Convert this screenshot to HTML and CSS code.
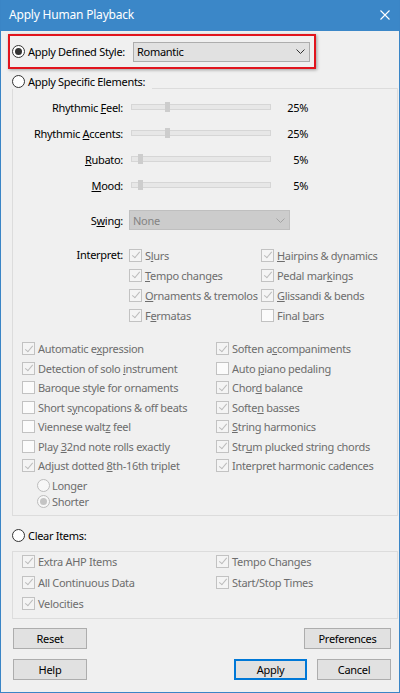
FILE: index.html
```html
<!DOCTYPE html>
<html>
<head>
<meta charset="utf-8">
<title>Apply Human Playback</title>
<link rel="stylesheet" href="styles.css">
</head>
<body>
<div class="window">
  <div class="titlebar">
    <span class="title">Apply Human Playback</span>
    <svg class="close" width="10" height="10" viewBox="0 0 10 10"><path d="M0.5 0.5L9.5 9.5M9.5 0.5L0.5 9.5" stroke="#fff" stroke-width="1.1" fill="none"/></svg>
  </div>
  <div class="content">
    <div class="defined">
      <span class="radio on"></span><span class="dlabel">Apply Defined Style:</span>
      <div class="select">
        <span>Romantic</span>
        <svg class="chev" width="9" height="5" viewBox="0 0 9 5"><path d="M0.5 0.5L4.5 4.5L8.5 0.5" fill="none" stroke="#333" stroke-width="1"/></svg>
      </div>
    </div>

    <div class="group-label"><span class="radio"></span><span>Apply Specific Elements:</span></div>
    <div class="group main">
      <div class="slider-row">
        <span class="flabel">Rhythmic <u>F</u>eel:</span>
        <div class="track"><span class="thumb" style="left:33px"></span></div>
        <span class="pct">25%</span>
      </div>
      <div class="slider-row">
        <span class="flabel">Rhythmic <u>A</u>ccents:</span>
        <div class="track"><span class="thumb" style="left:33px"></span></div>
        <span class="pct">25%</span>
      </div>
      <div class="slider-row">
        <span class="flabel"><u>R</u>ubato:</span>
        <div class="track"><span class="thumb" style="left:6px"></span></div>
        <span class="pct">5%</span>
      </div>
      <div class="slider-row">
        <span class="flabel"><u>M</u>ood:</span>
        <div class="track"><span class="thumb" style="left:6px"></span></div>
        <span class="pct">5%</span>
      </div>

      <div class="swing-row">
        <span class="flabel">S<u>w</u>ing:</span>
        <div class="select disabled">
          <span>None</span>
          <svg class="chev" width="9" height="5" viewBox="0 0 9 5"><path d="M0.5 0.5L4.5 4.5L8.5 0.5" fill="none" stroke="#a4a4a4" stroke-width="1"/></svg>
        </div>
      </div>

      <div class="interp">
        <span class="flabel">Interpret:</span>
        <div class="igrid">
          <div class="cb"><span class="box on"></span><span>S<u>l</u>urs</span></div>
          <div class="cb"><span class="box on"></span><span><u>H</u>airpins &amp; dynamics</span></div>
          <div class="cb"><span class="box on"></span><span><u>T</u>empo changes</span></div>
          <div class="cb"><span class="box on"></span><span>Pedal mar<u>k</u>ings</span></div>
          <div class="cb"><span class="box on"></span><span><u>O</u>rnaments &amp; tremolos</span></div>
          <div class="cb"><span class="box on"></span><span><u>G</u>lissandi &amp; bends</span></div>
          <div class="cb"><span class="box on"></span><span>F<u>e</u>rmatas</span></div>
          <div class="cb"><span class="box"></span><span>Final <u>b</u>ars</span></div>
        </div>
      </div>

      <div class="opts">
        <div class="ocol first">
          <div class="cb"><span class="box on"></span><span>Automatic e<u>x</u>pression</span></div>
          <div class="cb"><span class="box on"></span><span>Detection of solo <u>i</u>nstrument</span></div>
          <div class="cb"><span class="box"></span><span>Baroque style for ornaments</span></div>
          <div class="cb"><span class="box"></span><span>Short s<u>y</u>ncopations &amp; off beats</span></div>
          <div class="cb"><span class="box"></span><span>Viennese walt<u>z</u> feel</span></div>
          <div class="cb"><span class="box"></span><span>Play <u>3</u>2nd note rolls exactly</span></div>
          <div class="cb"><span class="box on"></span><span>Adjust dotted <u>8</u>th-16th triplet</span></div>
          <div class="subradios">
            <div class="rb"><span class="radio dis"></span><span>Longer</span></div>
            <div class="rb"><span class="radio dis on"></span><span>Shorter</span></div>
          </div>
        </div>
        <div class="ocol">
          <div class="cb"><span class="box on"></span><span>Soften a<u>c</u>companiments</span></div>
          <div class="cb"><span class="box"></span><span>Auto <u>p</u>iano pedaling</span></div>
          <div class="cb"><span class="box on"></span><span>Chor<u>d</u> balance</span></div>
          <div class="cb"><span class="box on"></span><span>Softe<u>n</u> basses</span></div>
          <div class="cb"><span class="box on"></span><span><u>S</u>tring harmonics</span></div>
          <div class="cb"><span class="box on"></span><span>Str<u>u</u>m plucked string chords</span></div>
          <div class="cb"><span class="box on"></span><span>Interpret harmonic cadences</span></div>
        </div>
      </div>
    </div>

    <div class="clear-label"><span class="radio"></span><span>Clear Items:</span></div>
    <div class="group clear">
      <div class="cb"><span class="box on"></span><span>Extra AHP Items</span></div>
      <div class="cb"><span class="box on"></span><span>Tempo Changes</span></div>
      <div class="cb"><span class="box on"></span><span>All Continuous Data</span></div>
      <div class="cb"><span class="box on"></span><span>Start/Stop Times</span></div>
      <div class="cb"><span class="box on"></span><span>Velocities</span></div>
    </div>

    <div class="btn-row">
      <button class="btn">Reset</button>
      <button class="btn wide">Preferences</button>
    </div>
    <div class="btn-row">
      <button class="btn">Help</button>
      <div class="btn-right">
        <button class="btn default">Apply</button>
        <button class="btn">Cancel</button>
      </div>
    </div>
  </div>
</div>
</body>
</html>
```

FILE: styles.css
```css
* { box-sizing: border-box; }

html, body {
  margin: 0;
  padding: 0;
}

body {
  font-family: "Noto Sans", "Open Sans", sans-serif;
  font-size: 11px;
  letter-spacing: -0.3px;
  color: #000;
  background: #f0f0f0;
}

.window {
  width: 400px;
  height: 693px;
  border: 1px solid #3a85c6;
  border-top: 0;
  background: #f0f0f0;
  display: flex;
  flex-direction: column;
}

.titlebar {
  height: 31px;
  flex: none;
  background: #3b87c8;
  color: #fff;
  display: flex;
  align-items: center;
  justify-content: space-between;
  padding: 0 9px 0 8px;
  font-size: 12px;
  letter-spacing: -0.2px;
}

.title { line-height: 1; margin-top: -1px; }

.close { display: block; margin-top: -1px; }

.content {
  padding: 0 1px 0 11px;
  display: flex;
  flex-direction: column;
}

/* radio buttons */
.radio {
  width: 13px;
  height: 13px;
  border: 1px solid #333;
  border-radius: 50%;
  background: #fff;
  flex: none;
  position: relative;
}
.radio.on::after {
  content: "";
  position: absolute;
  left: 2px;
  top: 2px;
  width: 7px;
  height: 7px;
  border-radius: 50%;
  background: #333;
}
.radio.dis { border-color: #bcbcbc; background: #f7f7f7; }
.radio.dis.on::after { background: #c4c4c4; }

/* defined style box */
.defined {
  margin: 3px 0 0 -4px;
  width: 308px;
  height: 35px;
  border: 2px solid #e1141d;
  box-shadow: 1px 1px 3px rgba(0, 0, 0, 0.35);
  display: flex;
  align-items: center;
  padding: 0 4px 0 2px;
}
.dlabel { margin-left: 3px; }

.select {
  width: 177px;
  height: 20px;
  margin-left: auto;
  border: 1px solid #adadad;
  background: #e1e1e1;
  display: flex;
  align-items: center;
  justify-content: space-between;
  padding: 0 4px 0 3px;
}
.chev { display: block; }

.select.disabled {
  width: 161px;
  margin-left: 6px;
  background: #cccccc;
  border-color: #bfbfbf;
  color: #838383;
  padding: 0 4px 0 3px;
}

/* group label (overlays group top border) */
.group-label {
  margin-top: 4px;
  height: 16px;
  width: 140px;
  white-space: nowrap;
  display: flex;
  align-items: center;
  gap: 3px;
  background: #f0f0f0;
  position: relative;
  z-index: 1;
  margin-bottom: -1px;
}

.group {
  border: 1px solid #dcdcdc;
}

.main {
  padding: 5px 0 5px 0;
  display: flex;
  flex-direction: column;
}

.flabel {
  width: 110px;
  text-align: right;
  flex: none;
}

.slider-row {
  height: 26px;
  display: flex;
  align-items: center;
}

.track {
  margin-left: 8px;
  width: 140px;
  height: 6px;
  border: 1px solid #d6d6d6;
  background: #e7e7e7;
  position: relative;
}
.thumb {
  position: absolute;
  top: -3px;
  width: 5px;
  height: 10px;
  background: #cdcdcd;
}
.pct {
  width: 37px;
  text-align: right;
}

.swing-row {
  margin-top: 12px;
  height: 20px;
  display: flex;
  align-items: center;
}

.interp {
  margin-top: 15px;
  display: flex;
  align-items: flex-start;
}
.interp .flabel {
  height: 20px;
  line-height: 20px;
}
.igrid {
  margin-left: 6px;
  display: grid;
  grid-template-columns: 132px auto;
  grid-auto-rows: 20px;
}

/* checkboxes */
.cb, .rb {
  display: flex;
  align-items: center;
  gap: 3px;
  color: #6d6d6d;
  white-space: nowrap;
}
.box {
  width: 13px;
  height: 13px;
  border: 1px solid #c2c2c2;
  background: #fbfbfb;
  flex: none;
  position: relative;
}
.box.on { background: #f4f4f4; }
.box.on::after {
  content: "";
  position: absolute;
  left: 3.5px;
  top: 0.5px;
  width: 3px;
  height: 7px;
  border: solid #bcbcbc;
  border-width: 0 1.2px 1.2px 0;
  transform: rotate(40deg);
}

u { text-underline-offset: 1px; }

.opts {
  margin-top: 14px;
  padding-left: 9px;
  display: flex;
}
.ocol {
  display: flex;
  flex-direction: column;
}
.ocol.first { width: 194px; }
.ocol .cb { height: 19.5px; }

.subradios {
  margin-top: 2px;
  padding-left: 15px;
  display: flex;
  flex-direction: column;
}
.rb { height: 16px; gap: 2px; }

.clear-label {
  margin-top: 12px;
  height: 15px;
  display: flex;
  align-items: center;
  gap: 3px;
}

.clear {
  margin-top: 8px;
  padding: 1px 0 6px 9px;
  display: grid;
  grid-template-columns: 194px auto;
  grid-auto-rows: 17px;
  row-gap: 4px;
}

/* buttons */
.btn-row {
  display: flex;
  justify-content: space-between;
  margin: 9px 7px 0 1px;
}
.btn-row + .btn-row { margin-top: 10px; }
.btn-right { display: flex; gap: 10px; }

.btn {
  width: 74px;
  height: 21px;
  border: 1px solid #adadad;
  background: #e1e1e1;
  font-family: inherit;
  font-size: 11px;
  letter-spacing: -0.3px;
  color: #000;
  padding: 0;
  margin: 0;
}
.btn.wide { width: 87px; }
.btn.default {
  width: 73px;
  border: 2px solid #0078d7;
}
```
